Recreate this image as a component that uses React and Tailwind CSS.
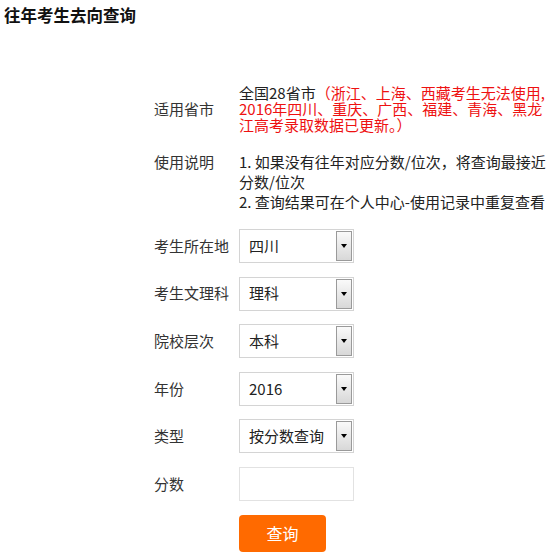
const font = { fontFamily: '"Noto Sans CJK SC", "Liberation Sans", sans-serif' };

function Row({ label, children }) {
  return (
    <div className="flex items-center h-[34px]">
      <div className="w-[85px] shrink-0 text-[15px] text-[#333]">{label}</div>
      {children}
    </div>
  );
}

function FakeSelect({ value }) {
  return (
    <div className="relative w-[115px] h-[34px] border border-[#d4d4d4] bg-white flex items-center">
      <span className="pl-[9px] text-[15px] text-[#222]">{value}</span>
      <div className="absolute right-[1px] top-[1px] bottom-[1px] w-[16px] border border-[#9a9a9a] bg-gradient-to-b from-[#fafafa] to-[#d8d8d8] flex items-center justify-center">
        <div className="w-0 h-0 border-l-[3.5px] border-r-[3.5px] border-t-[4px] border-l-transparent border-r-transparent border-t-black" />
      </div>
    </div>
  );
}

export default function App() {
  return (
    <div className="w-[550px] h-[560px] bg-white overflow-hidden" style={font}>
      <h1 className="pl-[4px] h-[30px] leading-[30px] text-[16.5px] font-bold text-[#111]">往年考生去向查询</h1>

      <div className="pl-[154px] mt-[55px]">
        <div className="flex items-center">
          <div className="w-[85px] shrink-0 text-[15px] text-[#333]">适用省市</div>
          <div className="text-[15px] leading-[16px] text-[#222]">
            全国28省市<span className="text-[#ee1111]">（浙江、上海、西藏考生无法使用,<br />2016年四川、重庆、广西、福建、青海、黑龙<br />江高考录取数据已更新。）</span>
          </div>
        </div>

        <div className="flex mt-[19px]">
          <div className="w-[85px] shrink-0 text-[15px] leading-[20px] text-[#333]">使用说明</div>
          <div className="text-[15px] leading-[20px] text-[#222]">
            1. 如果没有往年对应分数/位次，将查询最接近<br />分数/位次<br />2. 查询结果可在个人中心-使用记录中重复查看
          </div>
        </div>

        <div className="flex flex-col gap-[13.6px] mt-[17px]">
          <Row label="考生所在地"><FakeSelect value="四川" /></Row>
          <Row label="考生文理科"><FakeSelect value="理科" /></Row>
          <Row label="院校层次"><FakeSelect value="本科" /></Row>
          <Row label="年份"><FakeSelect value="2016" /></Row>
          <Row label="类型"><FakeSelect value="按分数查询" /></Row>
          <Row label="分数">
            <div className="w-[115px] h-[34px] border border-[#e2e2e2] bg-white" />
          </Row>
        </div>

        <div className="pl-[85px] mt-[14px]">
          <button className="w-[87px] h-[37px] rounded-[4px] bg-[#ff6a00] text-white text-[16px]">查询</button>
        </div>
      </div>
    </div>
  );
}
